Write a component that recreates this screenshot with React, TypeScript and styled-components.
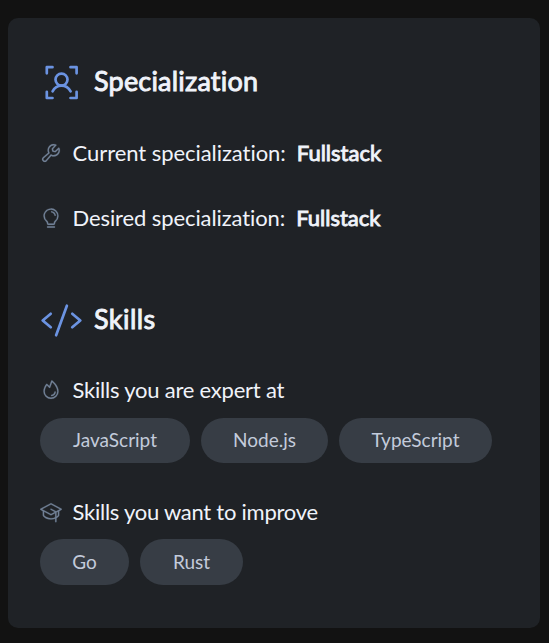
import React from "react";
import styled, { createGlobalStyle } from "styled-components";
import {
  PiCode,
  PiWrench,
  PiLightbulb,
  PiFire,
  PiGraduationCap,
} from "react-icons/pi";

const GlobalStyle = createGlobalStyle`
  *, *::before, *::after { box-sizing: border-box; }
  body {
    margin: 0;
    background: #121212;
    font-family: Lato, "Open Sans", sans-serif;
    font-variant-ligatures: none;
    color: #f0f3fa;
  }
`;

const Page = styled.main`
  height: 643px;
  padding: 18px 9px 15px 8px;
`;

const Card = styled.article`
  height: 610px;
  padding: 42px 32px 0;
  border-radius: 10px;
  background: #1f2226;
`;

const Section = styled.section<{ $gap?: number }>`
  margin-bottom: ${({ $gap = 0 }) => $gap}px;
`;

const Heading = styled.h2<{ $tracking: number }>`
  display: flex;
  align-items: center;
  gap: 11px;
  height: 44px;
  margin: 0;
  font-size: 27px;
  line-height: 44px;
  font-weight: 400;
  letter-spacing: ${({ $tracking }) => $tracking}px;
  -webkit-text-stroke: 0.9px currentColor;

  svg {
    flex: none;
    width: 43px;
    height: 43px;
    color: #6b93e1;
  }
`;

const HeadingText = styled.span`
  padding-bottom: 3px;
`;

const FocusIcon = styled.svg`
  fill: none;
  stroke: currentColor;
  stroke-width: 2.7px;
  stroke-linecap: round;
  stroke-linejoin: round;
`;

const Row = styled.div<{ $top: number; $tracking?: number }>`
  display: flex;
  align-items: center;
  height: 32px;
  margin-top: ${({ $top }) => $top}px;
  font-size: 22px;
  line-height: 32px;
  letter-spacing: ${({ $tracking = 0 }) => $tracking}px;
  white-space: nowrap;

  svg {
    flex: none;
    width: 22px;
    height: 22px;
    margin-right: 10.5px;
    color: #718096;
    stroke-width: 2;
  }
`;

const Value = styled.strong`
  margin-left: 11px;
  font-weight: 400;
  letter-spacing: 0;
  -webkit-text-stroke: 0.9px currentColor;
`;

const Tags = styled.ul<{ $top: number }>`
  display: flex;
  gap: 11px;
  margin: ${({ $top }) => $top}px 0 0;
  padding: 0;
  list-style: none;
`;

const Tag = styled.li<{ $width: number; $height: number }>`
  width: ${({ $width }) => $width}px;
  height: ${({ $height }) => $height}px;
  border-radius: 23px;
  background: #373d45;
  color: #c3cbdb;
  font-size: 19px;
  line-height: ${({ $height }) => ($height === 46 ? 46 : 44)}px;
  text-align: center;
`;

interface Skill {
  name: string;
  width: number;
}

const expert: Skill[] = [
  { name: "JavaScript", width: 150 },
  { name: "Node.js", width: 127 },
  { name: "TypeScript", width: 153 },
];
const improve: Skill[] = [
  { name: "Go", width: 89 },
  { name: "Rust", width: 103 },
];

interface TagListProps {
  items: Skill[];
  top: number;
  height: number;
}

const TagList = ({ items, top, height }: TagListProps) => (
  <Tags $top={top}>
    {items.map(({ name, width }) => (
      <Tag key={name} $width={width} $height={height}>
        {name}
      </Tag>
    ))}
  </Tags>
);

const UserFocus = () => (
  <FocusIcon viewBox="0 0 43 43">
    <path d="M6.8 12.3V6.2H12.5M30.5 6.2H36.6V12.3M36.6 30.8V37H30.5M12.5 37H6.8V30.8" />
    <circle cx="21.5" cy="18.6" r="6" />
    <path d="M12.6 30.4C14.4 26.8 17.6 24.6 21.5 24.6S28.6 26.8 30.6 30.4" />
  </FocusIcon>
);

export default function App() {
  return (
    <>
      <GlobalStyle />
      <Page>
        <Card>
          <Section $gap={64}>
            <Heading $tracking={0.2}>
              <UserFocus />
              <HeadingText>Specialization</HeadingText>
            </Heading>
            <Row $top={33} $tracking={-0.05}>
              <PiWrench />
              Current specialization:<Value>Fullstack</Value>
            </Row>
            <Row $top={33} $tracking={-0.1}>
              <PiLightbulb />
              Desired specialization:<Value>Fullstack</Value>
            </Row>
          </Section>
          <Section>
            <Heading $tracking={0.45}>
              <PiCode />
              <HeadingText>Skills</HeadingText>
            </Heading>
            <Row $top={32} $tracking={-0.22}>
              <PiFire />
              Skills you are expert at
            </Row>
            <TagList items={expert} top={12} height={45} />
            <Row $top={33} $tracking={-0.25}>
              <PiGraduationCap />
              Skills you want to improve
            </Row>
            <TagList items={improve} top={11} height={46} />
          </Section>
        </Card>
      </Page>
    </>
  );
}
